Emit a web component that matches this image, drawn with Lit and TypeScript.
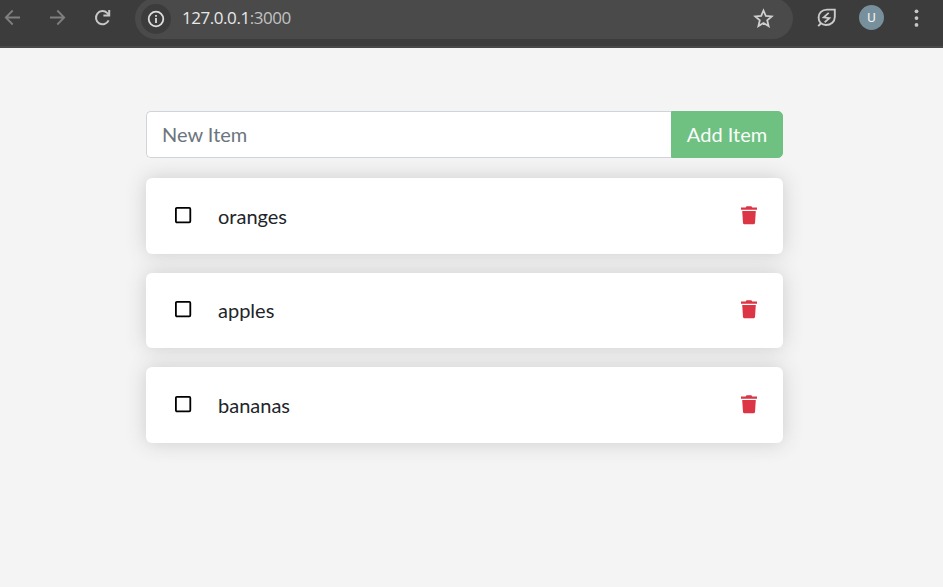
import { LitElement, html, css } from "lit";
import { customElement, property } from "lit/decorators.js";

@customElement("browser-bar")
class BrowserBar extends LitElement {
  static styles = css`
    :host {
      display: flex;
      box-sizing: border-box;
      height: 48px;
      background: #3c3c3c;
      border-bottom: 2px solid #484848;
      font-family: "Open Sans", "Noto Sans", sans-serif;
      overflow: hidden;
    }
    svg {
      display: block;
      flex: none;
    }
    .nav {
      display: flex;
      align-items: center;
      width: 135px;
      height: 36px;
      gap: 24px;
      flex: none;
      box-sizing: border-box;
    }
    .nav svg:first-child {
      margin-left: 2px;
    }
    .nav svg:last-child {
      margin-left: -1px;
    }
    .address {
      display: flex;
      align-items: center;
      box-sizing: border-box;
      width: 658px;
      height: 41px;
      margin-top: -2px;
      padding: 0 18px 0 6px;
      border-radius: 21px;
      background: #4a4a4a;
    }
    .info {
      display: grid;
      place-items: center;
      width: 30px;
      height: 30px;
      border-radius: 50%;
      background: #3c3c3c;
    }
    .url {
      flex: 1;
      margin: -1px 0 0 11px;
      font-size: 17px;
      letter-spacing: -0.45px;
      line-height: 24px;
      color: #e8e8e8;
    }
    .port {
      color: #c2c2c2;
    }
    .tools {
      display: flex;
      align-items: center;
      height: 35px;
    }
    .leaf {
      margin-left: 22px;
    }
    .avatar {
      display: grid;
      place-items: center;
      width: 25px;
      height: 25px;
      margin-left: 21px;
      border-radius: 50%;
      background: #78909c;
      color: #f4f4f4;
      font: 13px/25px Roboto, sans-serif;
    }
    .dots {
      margin-left: 20px;
    }
  `;

  render() {
    return html`
      <div class="nav">
        <svg width="22" height="22" viewBox="0 0 22 22" fill="none" stroke="#7f7f7f" stroke-width="1.8">
          <path d="M18 10.5H4M10.7 3.5L3.8 10.5L10.7 17.5" />
        </svg>
        <svg width="22" height="22" viewBox="0 0 22 22" fill="none" stroke="#7f7f7f" stroke-width="1.8">
          <path d="M2 10.5H16M9.3 3.5L16.2 10.5L9.3 17.5" />
        </svg>
        <svg width="20" height="20" viewBox="0 0 20 20" fill="none" stroke="#c7c7c7" stroke-width="2">
          <path d="M15.6 12.4A6.6 6.6 0 1 1 14.3 5.1L16 7" />
          <path d="M16.2 2V7.6H10.4" />
        </svg>
      </div>
      <div class="address">
        <div class="info">
          <svg width="18" height="18" viewBox="0 0 18 18" fill="none" stroke="#dedede" stroke-width="1.8">
            <circle cx="9" cy="9" r="7.3" />
            <path d="M9 8.1V13M9 4.9V6.7" />
          </svg>
        </div>
        <div class="url">127.0.0.1<span class="port">:3000</span></div>
        <svg width="23" height="22" viewBox="0 0 23 22" fill="none" stroke="#cfcfcf" stroke-width="1.8">
          <path d="M11.5 2.5L13.8 7.9L19.7 8.4L15.2 12.3L16.6 18.1L11.5 15L6.4 18.1L7.8 12.3L3.3 8.4L9.2 7.9Z" />
        </svg>
      </div>
      <div class="tools">
        <svg class="leaf" width="23" height="22" viewBox="0 0 23 22" fill="none" stroke="#cbcbcb" stroke-width="1.9">
          <path d="M19.8 2.6H12C7 2.6 3.6 6 3.6 10.6C3.6 15 6.6 18 11 18C16 18 19.8 14.6 19.8 10Z" />
          <path d="M3.2 19.2L6.3 16" />
          <path d="M13.7 5.9L8.7 10.3L14.4 11.2L9.7 15.3" stroke-width="1.8" />
        </svg>
        <div class="avatar">U</div>
        <svg class="dots" width="24" height="22" viewBox="0 0 24 22" fill="#c7c7c7">
          <circle cx="12.5" cy="4.3" r="1.9" />
          <circle cx="12.5" cy="11.1" r="1.9" />
          <circle cx="12.5" cy="17.9" r="1.9" />
        </svg>
      </div>
    `;
  }
}

@customElement("todo-item")
class TodoItem extends LitElement {
  @property() name = "";

  static styles = css`
    :host {
      display: flex;
      box-sizing: border-box;
      height: 75.6px;
      padding: 0 24px 0 27px;
      border-radius: 6px;
      background: #fff;
      box-shadow: 0 0 20px #ccc;
      align-items: center;
    }
    .name {
      flex: 1;
      margin-top: -0.4px;
      padding-left: 25px;
      font-size: 20px;
      line-height: 30px;
      color: #212529;
    }
    svg {
      display: block;
      margin-top: -2.4px;
    }
  `;

  render() {
    return html`
      <svg width="20" height="20" viewBox="0 0 20 20" fill="none" stroke="#000" stroke-width="1.8">
        <rect x="2.9" y="2.9" width="14.4" height="14.4" rx="1" />
      </svg>
      <span class="name">${this.name}</span>
      <svg width="20" height="20" viewBox="0 0 20 20" fill="#dc3545">
        <path d="M2 2.6H6.7L7.5 1.3H12.4L13.2 2.6H18V4.8H2ZM3.2 6H16.8L16 18.1Q15.9 19.2 14.9 19.2H5.1Q4.1 19.2 4 18.1Z" />
      </svg>
    `;
  }
}

@customElement("app-root")
class AppRoot extends LitElement {
  static styles = css`
    :host {
      display: block;
      height: 587px;
      overflow: hidden;
      background: #f4f4f4;
      font-family: Lato, sans-serif;
      font-size: 20px;
    }
    .content {
      width: 637px;
      margin: 63px 0 0 146px;
    }
    .entry {
      display: flex;
      height: 47px;
      margin-bottom: 20.2px;
    }
    input {
      flex: 1;
      min-width: 0;
      box-sizing: border-box;
      padding: 0 15px 2px;
      border: 1px solid #ced4da;
      border-right: 0;
      border-radius: 5px 0 0 5px;
      background: #fff;
      font: inherit;
      outline: none;
    }
    input::placeholder {
      color: #6c757d;
      opacity: 1;
    }
    button {
      box-sizing: border-box;
      width: 112px;
      padding: 0 0 2px;
      border: 1px solid #28a745;
      border-radius: 0 5px 5px 0;
      background: #28a745;
      color: #fff;
      font: inherit;
      opacity: 0.65;
    }
    .list {
      display: flex;
      flex-direction: column;
      gap: 18.9px;
    }
  `;

  render() {
    return html`
      <browser-bar></browser-bar>
      <main class="content">
        <div class="entry">
          <input placeholder="New Item" />
          <button>Add Item</button>
        </div>
        <div class="list">
          ${["oranges", "apples", "bananas"].map((n) => html`<todo-item name=${n}></todo-item>`)}
        </div>
      </main>
    `;
  }
}
